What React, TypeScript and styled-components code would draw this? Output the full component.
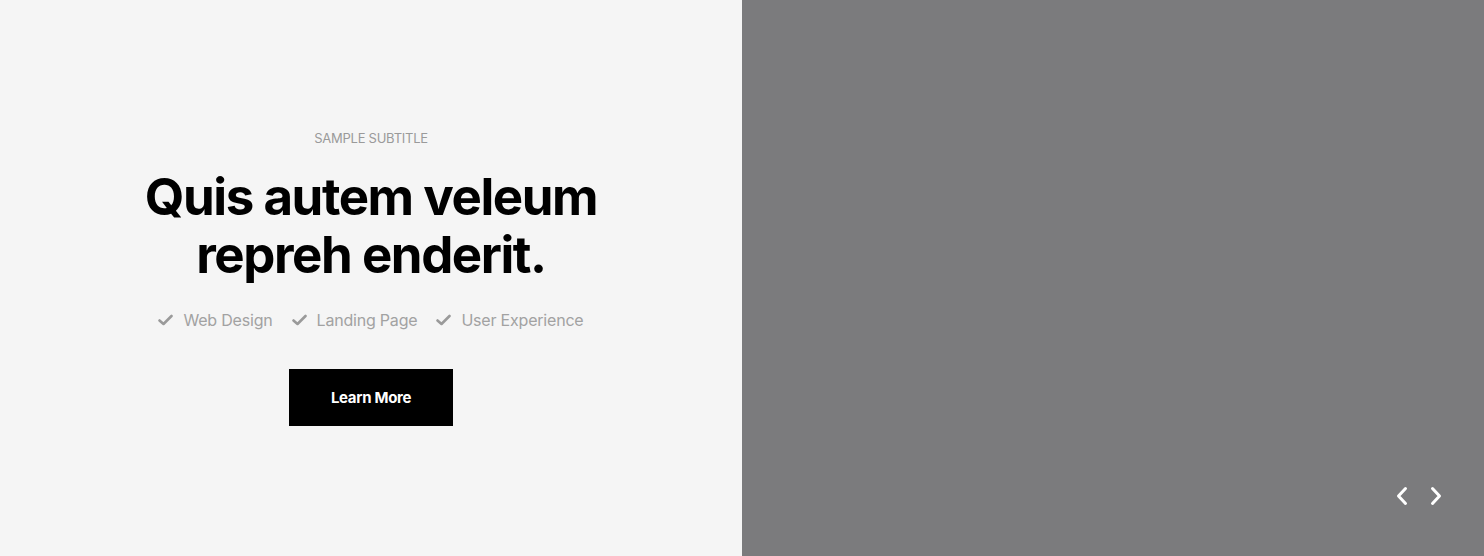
import React from "react";
import styled, { createGlobalStyle } from "styled-components";

const Global = createGlobalStyle`
  html, body { margin: 0; padding: 0; }
  body { font-family: Inter, "Noto Sans", sans-serif; background: #f5f5f5; }
`;

const Page = styled.div`
  display: grid;
  grid-template-columns: 742px 742px;
  height: 556px;
  overflow: hidden;
`;

const Left = styled.section`
  background: #f5f5f5;
  display: flex;
  flex-direction: column;
  align-items: center;
  padding-top: 130px;
  box-sizing: border-box;
`;

const Subtitle = styled.div`
  font-size: 13px;
  color: #9a9a9a;
  letter-spacing: -0.25px;
  line-height: 16px;
  text-transform: uppercase;
`;

const Title = styled.h1`
  margin: 22px 0 0;
  font-size: 51px;
  font-weight: 700;
  line-height: 58px;
  letter-spacing: -1.45px;
  color: #000;
  text-align: center;
`;

const Features = styled.ul`
  list-style: none;
  margin: 26px 0 0;
  padding: 0;
  display: flex;
  gap: 19px;
`;

const Feature = styled.li`
  display: flex;
  align-items: center;
  gap: 10px;
  font-size: 16px;
  color: #a2a2a2;
  line-height: 20px;
  letter-spacing: -0.2px;
`;

const Button = styled.button`
  margin-top: 39px;
  width: 164px;
  height: 57px;
  border: none;
  background: #000;
  color: #fff;
  font-family: Inter, sans-serif;
  font-weight: 700;
  font-size: 15px;
  letter-spacing: -0.3px;
  cursor: pointer;
`;

const Right = styled.section`
  background: #7b7b7d;
  display: flex;
  align-items: flex-end;
  justify-content: flex-end;
  padding: 0 40px 50px 0;
  box-sizing: border-box;
`;

const Nav = styled.div`
  display: flex;
  gap: 18px;
`;

const Arrow = styled.button`
  background: none;
  border: none;
  padding: 0;
  width: 16px;
  height: 20px;
  display: flex;
  align-items: center;
  justify-content: center;
  cursor: pointer;
`;

const Check = () => (
  <svg width="15" height="12" viewBox="0 0 15 12">
    <path d="M1.5 6.5 L5.5 10 L13.5 2" fill="none" stroke="#9a9a9a" strokeWidth="2.6" strokeLinecap="round" strokeLinejoin="round" />
  </svg>
);

const Chevron = ({ dir }: { dir: "left" | "right" }) => (
  <svg width="12" height="20" viewBox="0 0 12 20">
    <path
      d={dir === "left" ? "M9.5 2.5 L2.5 10 L9.5 17.5" : "M2.5 2.5 L9.5 10 L2.5 17.5"}
      fill="none"
      stroke="#fff"
      strokeWidth="3"
      strokeLinecap="round"
      strokeLinejoin="round"
    />
  </svg>
);

export default function App() {
  return (
    <>
      <Global />
      <Page>
        <Left>
          <Subtitle>Sample Subtitle</Subtitle>
          <Title>
            Quis autem veleum
            <br />
            repreh enderit.
          </Title>
          <Features>
            {["Web Design", "Landing Page", "User Experience"].map((f) => (
              <Feature key={f}>
                <Check />
                {f}
              </Feature>
            ))}
          </Features>
          <Button>Learn More</Button>
        </Left>
        <Right>
          <Nav>
            <Arrow aria-label="Previous">
              <Chevron dir="left" />
            </Arrow>
            <Arrow aria-label="Next">
              <Chevron dir="right" />
            </Arrow>
          </Nav>
        </Right>
      </Page>
    </>
  );
}
